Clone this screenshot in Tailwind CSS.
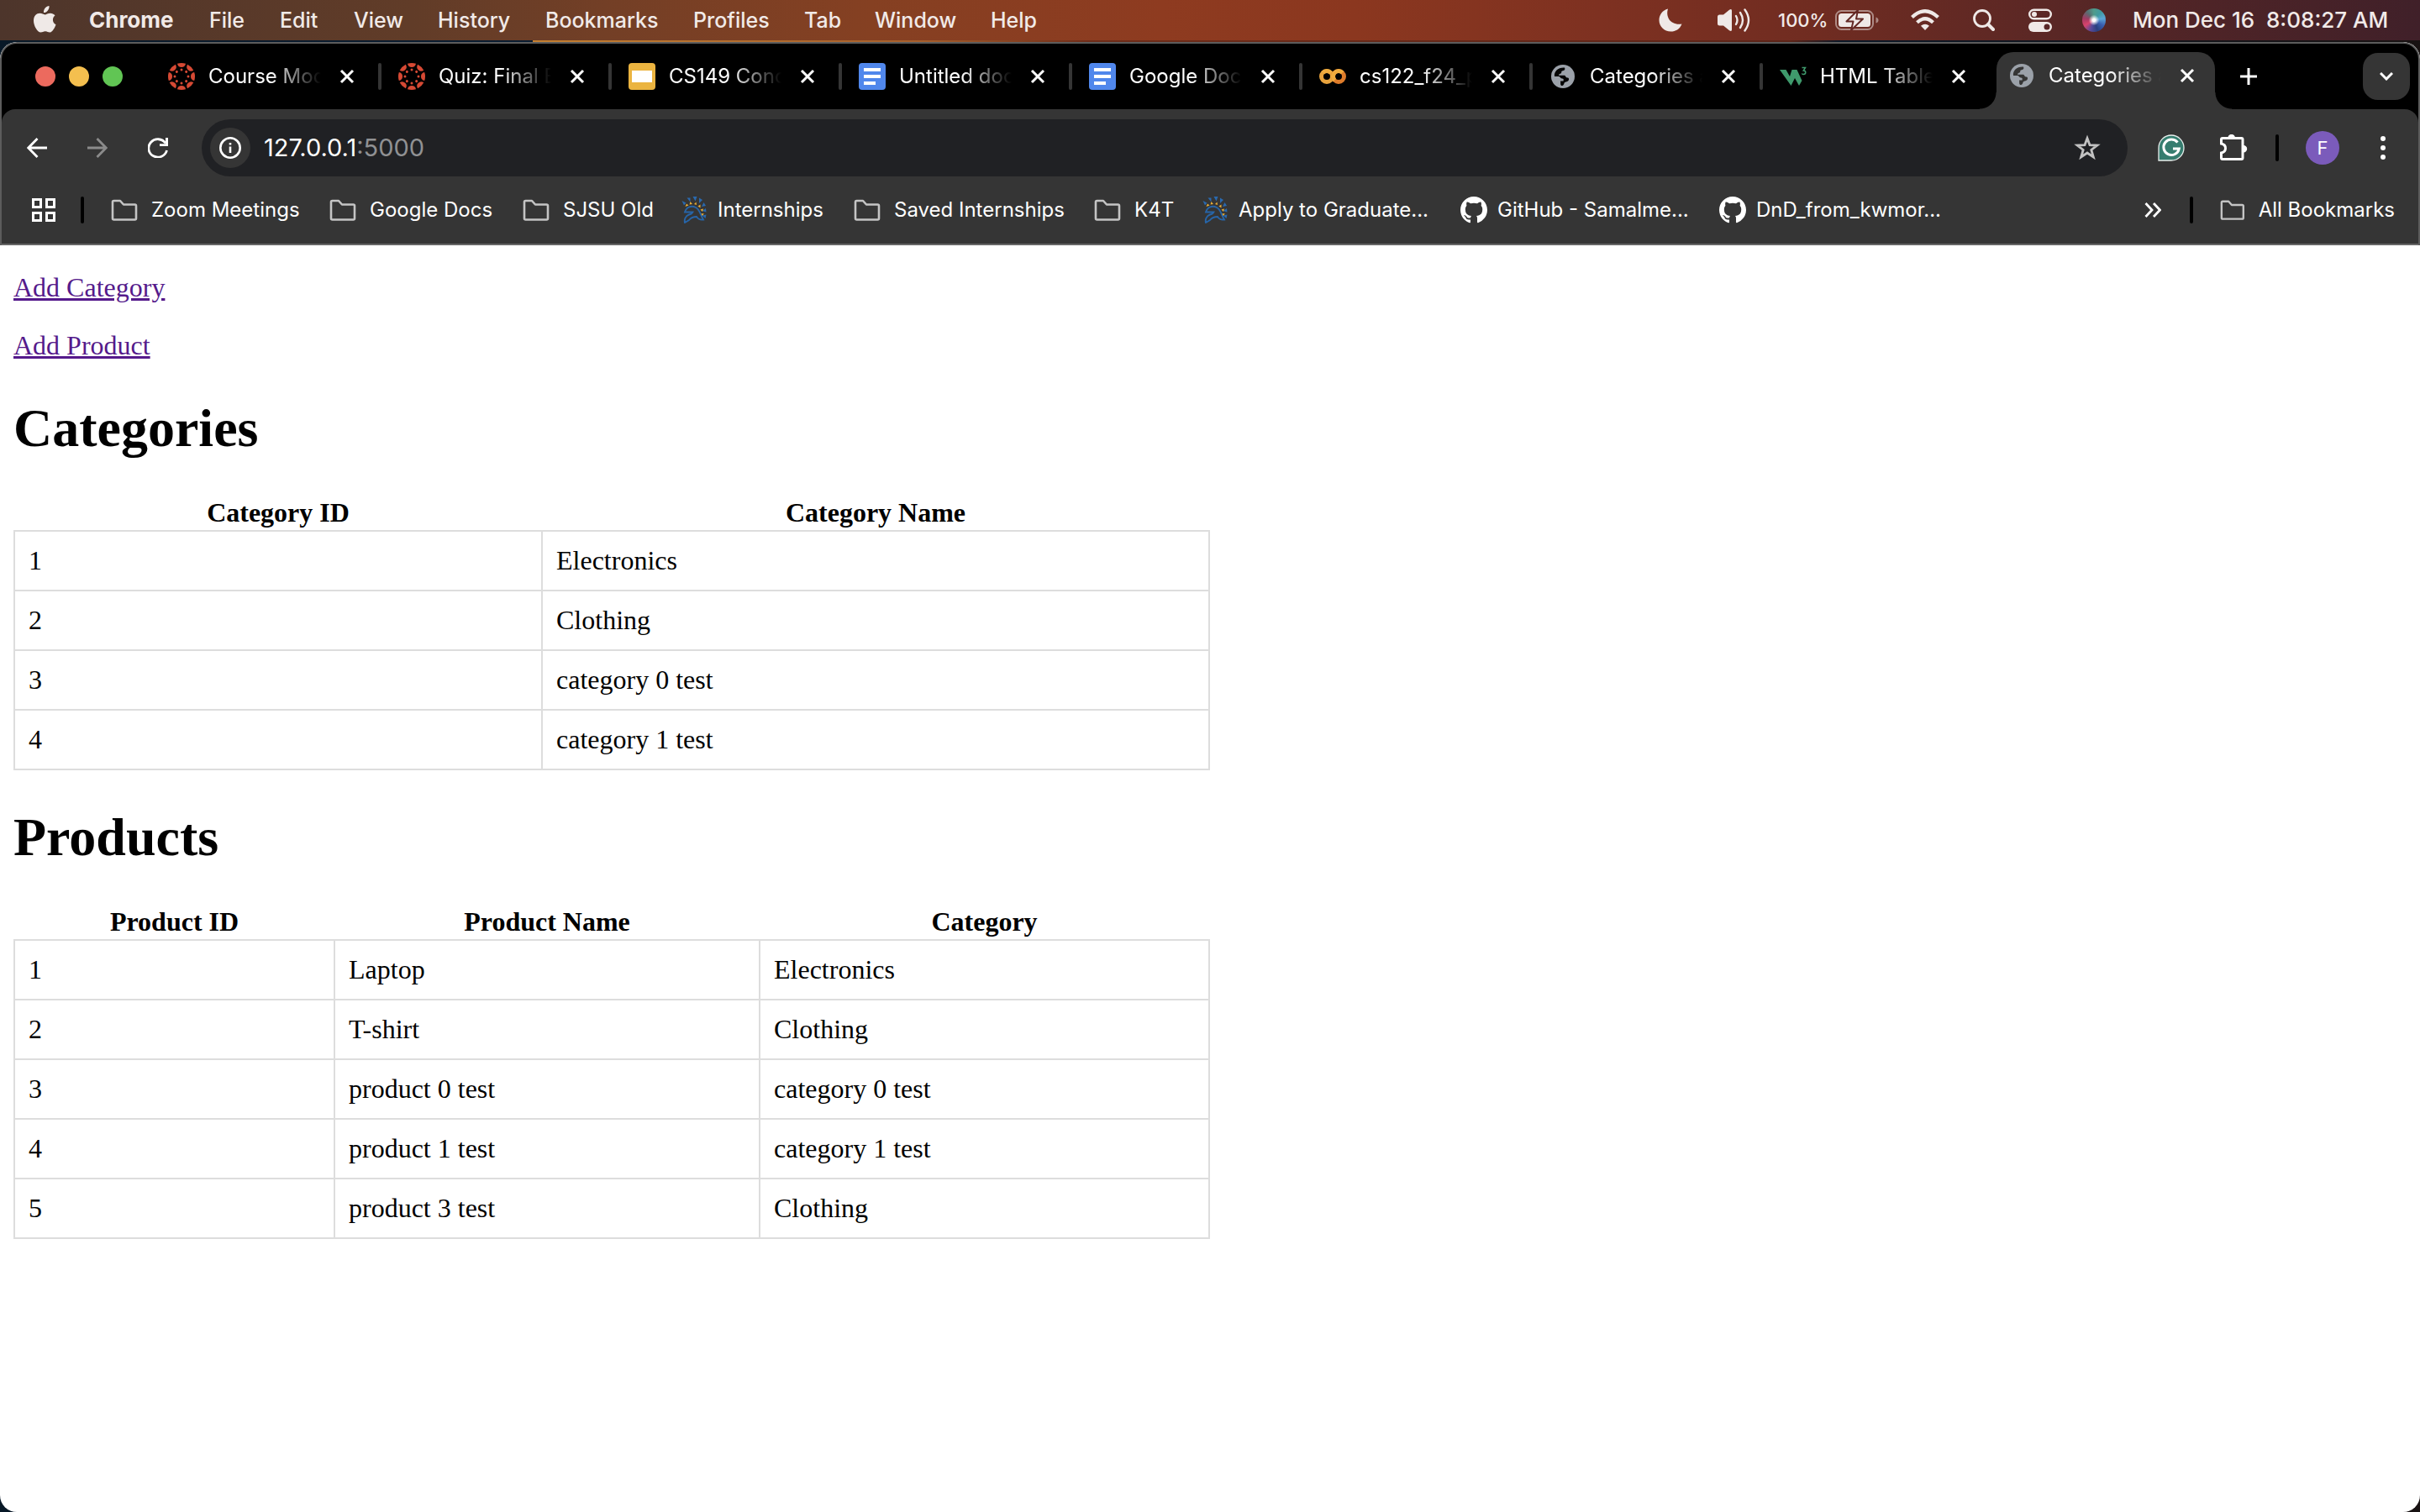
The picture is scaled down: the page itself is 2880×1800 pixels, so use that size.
<!DOCTYPE html>
<html lang="en">
<head>
<meta charset="utf-8">
<title>Categories and Products</title>
<script src="https://cdn.jsdelivr.net/npm/@tailwindcss/browser@4"></script>
</head>
<body class="min-h-screen flex flex-col bg-[linear-gradient(90deg,#081827_0%,#0a1c30_22%,#c47f30_22%,#a8602c_38%,#6e2c19_45%,#5c2418_74%,#0c1726_76%,#181212_100%)] font-['Inter',sans-serif] text-white">

<!-- Shared icons -->
<svg class="hidden" aria-hidden="true">
  <symbol id="close" viewBox="0 0 18 18"><path d="M2 2l14 14M16 2L2 16" stroke="#fff" stroke-width="3" fill="none"/></symbol>
  <symbol id="folder" viewBox="0 0 32 26"><path d="M2 23V3.500Q2 2 3.500 2H11l4 4.500h13.500Q30 6.500 30 8v15q0 1.500-1.500 1.500h-25Q2 24.500 2 23z" stroke="#c4c4c4" stroke-width="2.600" fill="none" stroke-linejoin="round"/></symbol>
  <symbol id="canvas" viewBox="-16 -16 32 32">
    <g fill="#d64934">
      <g id="seg"><path d="M-5 -15.200Q0 -16.800 5 -15.200Q4.200 -11 0 -11Q-4.200 -11 -5 -15.200z"/><circle cy="-8" r="1.500"/></g>
      <use href="#seg" transform="rotate(45)"/><use href="#seg" transform="rotate(90)"/><use href="#seg" transform="rotate(135)"/><use href="#seg" transform="rotate(180)"/><use href="#seg" transform="rotate(225)"/><use href="#seg" transform="rotate(270)"/><use href="#seg" transform="rotate(315)"/>
    </g>
  </symbol>
  <symbol id="slides" viewBox="0 0 32 32"><rect width="32" height="32" rx="4" fill="#ebb440"/><rect x="4" y="9" width="24" height="14" fill="#fff"/></symbol>
  <symbol id="docs" viewBox="0 0 32 32"><rect width="32" height="32" rx="4" fill="#5087ec"/><path d="M6 6h20v4H6zM6 14h20v4H6zM6 22h14v4H6z" fill="#fff"/></symbol>
  <symbol id="colab" viewBox="0 0 32 32"><g fill="none" stroke-width="5"><circle cx="9" cy="16" r="6.500" stroke="#e8a33d"/><circle cx="23" cy="16" r="6.500" stroke="#de7c2b"/><path d="M18.400 11.400a6.500 6.500 0 0 1 9.200 0M13.600 11.400a6.500 6.500 0 0 0-9.200 0" stroke="#f0ac3e"/><path d="M18.400 11.400a6.500 6.500 0 0 0 0 9.200" stroke="#f0ac3e"/></g></symbol>
  <symbol id="globe" viewBox="0 0 28 28"><circle cx="14" cy="14" r="14" fill="#9ba1a9"/><path d="M16 3.500c1 2 0 3.500-2 3.800-1.500.2-2 1.200-1.800 2.200.2 1.500-3.200 1-3.200 3.300h6.500c2 0 1.500 2.700 3.500 2.700 2.500 0 2.500 2 1.500 3.500-1.500 1.800-4.500 1-5 3.200s-1.500 2.800-3.500 2.800c-1.500-1.500-.5-3-1-5.500h3.500c.5-1.800.5-2.700-1.500-3-2.500-.4-2-2.500-4.500-2.500H4C3 8 8.500 3 16 3.500z" fill="#050505"/></symbol>
  <symbol id="globe-tab" viewBox="0 0 28 28"><circle cx="14" cy="14" r="14" fill="#9ba1a9"/><path d="M16 3.500c1 2 0 3.500-2 3.800-1.500.2-2 1.200-1.800 2.200.2 1.500-3.200 1-3.200 3.300h6.500c2 0 1.500 2.700 3.500 2.700 2.500 0 2.500 2 1.500 3.500-1.500 1.800-4.500 1-5 3.200s-1.500 2.800-3.500 2.800c-1.500-1.500-.5-3-1-5.500h3.500c.5-1.800.5-2.700-1.500-3-2.500-.4-2-2.500-4.500-2.500H4C3 8 8.500 3 16 3.500z" fill="#353535"/></symbol>
  <symbol id="w3" viewBox="0 0 32 32"><path d="M0 8h7.500l4.500 8 2.500-8h6l6 13-3.500 6-5-9-4.500 9z" fill="#3f9a6c"/><path d="M26.500 5.500h4l-2.200 3.500q2.500 0 2.500 2.300 0 2.200-2.500 2.200-1.500 0-2-1" stroke="#3f9a6c" stroke-width="1.500" fill="none"/></symbol>
  <symbol id="spartan" viewBox="0 0 32 32">
    <path d="M5 18.500C7 12 13 10.500 18 13c5.500 3 5 8.500 9 14.500-3 .5-6-.5-8-3.500-4 0-7 1.500-9 4l-5 3c-1-4 1-8 5-9.500 2-.5 4-1.500 4.500-3z" fill="none" stroke="#2765a8" stroke-width="1.900"/>
    <path d="M1.500 5l5 2.500-2.500 3zM7.500 1.500h4l0 5zM14.500 0h5l-2 5.500zM22 1.500l4 2.500-4 4zM27.500 7l2.500 4-5 1zM30 14l.5 4.500-5-1.500zM30.500 21.500l-1 4.500-4-3.500z" fill="#2a69ae"/>
    <path d="M5.500 12l1.500-3.500 2.500 2zM10.500 9.500l1-3.500 2.500 3zM16 9l2.500-2.500.5 3.500zM20.500 11.500l3-2 0 4zM23.500 15.500l3.500-1-1 3.500zM24.500 20l3.500.500-2.500 2.500z" fill="#e8ad36"/>
  </symbol>
  <symbol id="github" viewBox="0 0 16 16"><path fill="#fff" d="M8 0C3.580 0 0 3.580 0 8c0 3.540 2.290 6.530 5.470 7.590.4.070.55-.17.55-.38 0-.19-.01-.82-.01-1.490-2.010.37-2.530-.49-2.690-.94-.09-.23-.48-.94-.82-1.130-.28-.15-.68-.52-.01-.53.63-.01 1.080.58 1.230.82.72 1.210 1.870.87 2.330.66.07-.52.28-.87.51-1.070-1.780-.2-3.640-.89-3.640-3.950 0-.87.31-1.590.82-2.150-.08-.2-.36-1.020.08-2.120 0 0 .67-.21 2.200.82.64-.18 1.320-.27 2-.27s1.360.09 2 .27c1.530-1.040 2.200-.82 2.200-.82.44 1.100.16 1.920.08 2.120.51.56.82 1.270.82 2.150 0 3.070-1.870 3.750-3.650 3.950.29.25.54.73.54 1.480 0 1.070-.01 1.930-.01 2.200 0 .21.15.46.55.38A8.010 8.010 0 0 0 16 8c0-4.420-3.580-8-8-8z"/></symbol>
</svg>

<!-- System menu bar -->
<header class="h-12 flex items-center pl-[38px] pr-[37px] text-[25px] leading-8 font-medium text-[#f1eae8] bg-[linear-gradient(90deg,#4d352b_0%,#613c28_17%,#733f26_25%,#854022_36%,#8e3b20_48%,#8b371f_56%,#7e3121_66%,#702c21_75%,#552626_87%,#402029_100%)]">
  <svg class="w-[30px] h-[34px] mr-[38px]" viewBox="0 0 30 34" fill="#efe9e7"><path d="M20.500 0c.3 2.300-.6 4.300-1.800 5.800-1.200 1.400-2.900 2.400-4.700 2.300-.3-2.200.7-4.300 1.800-5.600C17 1.100 18.900.1 20.500 0zM27.500 11.500c-3.500 2.300-3.600 8.500 1 10.700-1 3-3.800 8.800-7 9.300-2.200.2-3-1.300-5.500-1.300s-3.500 1.300-5.500 1.300C6.500 31.500 2 23.500 2 17.700 2 12 5.500 8.800 9.400 8.800c2.500 0 4.500 1.600 6 1.600s3.700-1.700 6.500-1.700c2 0 4.300.9 5.600 2.800z"/></svg>
  <nav class="flex items-center gap-[42px]">
    <b class="w-[101px] text-[26px] font-bold">Chrome</b>
    <button class="w-[42px] text-left whitespace-nowrap">File</button>
    <button class="w-[46px] text-left whitespace-nowrap">Edit</button>
    <button class="w-[58px] text-left whitespace-nowrap">View</button>
    <button class="w-[86px] text-left whitespace-nowrap">History</button>
    <button class="w-[134px] text-left whitespace-nowrap">Bookmarks</button>
    <button class="w-[90px] text-left whitespace-nowrap">Profiles</button>
    <button class="w-[42px] text-left whitespace-nowrap">Tab</button>
    <button class="w-[96px] text-left whitespace-nowrap">Window</button>
    <button class="w-[56px] text-left whitespace-nowrap">Help</button>
  </nav>
  <div class="ml-auto flex items-center">
    <svg class="w-7 h-7 mr-[42px]" viewBox="0 0 28 28"><path d="M11 0.500C8 10 14 20.500 27.500 18.500 25 25 20 27.500 14.500 27.500 6.500 27.500.500 21.500.500 14 .500 8 4.500 2 11 .500z" fill="#efe9e7"/></svg>
    <svg class="w-10 h-7 mr-8" viewBox="0 0 40 28"><path d="M0 10q0-2.500 2.500-2.500H7L14 1.800q3-2 3 1v22.400q0 3-3 1L7 20.500H2.500Q0 20.500 0 18z" fill="#efe9e7"/><path d="M22 9q3 5 0 10M27 5q6 9 0 18M32.500 1.500q9 12.500 0 25" stroke="#efe9e7" stroke-width="2.400" fill="none" stroke-linecap="round"/></svg>
    <span class="w-[60px] text-[22px] mr-2">100%</span>
    <svg class="w-[52px] h-6 mr-[38px]" viewBox="0 0 52 24"><rect x="1" y="1" width="44" height="22" rx="6.500" fill="none" stroke="#efe9e7" stroke-opacity=".5" stroke-width="2"/><rect x="4" y="4" width="38" height="16" rx="3.500" fill="#efe9e7"/><path d="M48.500 8.500v7q3-1 3-3.500t-3-3.500z" fill="#efe9e7" fill-opacity=".5"/><path d="M27 0L13.500 13.500h8L19 24 33 10.500h-8z" fill="#efe9e7" stroke="#632925" stroke-width="2" stroke-linejoin="round"/></svg>
    <svg class="w-[34px] h-[26px] mr-10" viewBox="0 0 34 26" fill="none" stroke="#efe9e7" stroke-width="4.200"><path d="M1.500 9.500q15.500-14.500 31 0M7.500 15.800q9.500-9 19 0"/><path d="M17 25l-5-5.200q5-4 10 0z" fill="#efe9e7" stroke="none"/></svg>
    <svg class="w-[26px] h-[26px] mr-10" viewBox="0 0 26 26" fill="none" stroke="#efe9e7" stroke-linecap="round"><circle cx="11" cy="11" r="9.500" stroke-width="2.800"/><path d="M18 18l6 6" stroke-width="4"/></svg>
    <svg class="w-7 h-7 mr-[36px]" viewBox="0 0 28 28"><rect x="1.200" y="1.700" width="25.600" height="10.600" rx="5.300" fill="none" stroke="#efe9e7" stroke-width="2.400"/><circle cx="7" cy="7" r="3" fill="#efe9e7"/><rect y="16" width="28" height="12" rx="6" fill="#efe9e7"/><circle cx="22" cy="22" r="3.500" fill="#592728"/></svg>
    <span class="size-7 mr-[32px] rounded-full bg-[radial-gradient(circle_at_50%_50%,#ffffff_8%,#ffffff00_32%),conic-gradient(#4f9c8c,#3f9aa0,#5ba6d6,#3a5fb0,#29407e,#5a4a9a,#d8436c,#a33a62,#5a6b70,#4f9c8c)]"></span>
    <time class="w-[305px] text-[26px] whitespace-pre">Mon Dec 16  8:08:27 AM</time>
  </div>
</header>

<!-- Browser window -->
<div class="mt-[2px] grow flex flex-col rounded-[20px] overflow-hidden bg-white">
  <div class="border-2 border-b-0 border-[#5c5c5c] rounded-t-[20px] overflow-hidden bg-black">
    <!-- Tab strip -->
    <div class="h-[78px] flex items-center pl-10 pr-[10px]">
      <div class="flex gap-4 mr-[54px]">
        <button aria-label="Close window" class="size-6 rounded-full bg-[#ec6a5e]"></button>
        <button aria-label="Minimize" class="size-6 rounded-full bg-[#f4bf4f]"></button>
        <button aria-label="Zoom" class="size-6 rounded-full bg-[#61c554]"></button>
      </div>
      <ul class="self-stretch flex items-center text-[24px] leading-8">
        <li class="w-[274px] flex items-center"><svg class="size-8 mr-4"><use href="#canvas"/></svg><span class="w-[134px] overflow-hidden whitespace-nowrap [mask-image:linear-gradient(90deg,#000_55%,transparent)]">Course Modules</span><button aria-label="Close tab" class="ml-[22px]"><svg class="size-[18px]"><use href="#close"/></svg></button><i class="w-1 h-8 ml-7 rounded-full bg-[#353535]"></i></li>
        <li class="w-[274px] flex items-center"><svg class="size-8 mr-4"><use href="#canvas"/></svg><span class="w-[134px] overflow-hidden whitespace-nowrap [mask-image:linear-gradient(90deg,#000_55%,transparent)]">Quiz: Final Exam</span><button aria-label="Close tab" class="ml-[22px]"><svg class="size-[18px]"><use href="#close"/></svg></button><i class="w-1 h-8 ml-7 rounded-full bg-[#353535]"></i></li>
        <li class="w-[274px] flex items-center"><svg class="size-8 mr-4"><use href="#slides"/></svg><span class="w-[134px] overflow-hidden whitespace-nowrap [mask-image:linear-gradient(90deg,#000_55%,transparent)]">CS149 Concurrency</span><button aria-label="Close tab" class="ml-[22px]"><svg class="size-[18px]"><use href="#close"/></svg></button><i class="w-1 h-8 ml-7 rounded-full bg-[#353535]"></i></li>
        <li class="w-[274px] flex items-center"><svg class="size-8 mr-4"><use href="#docs"/></svg><span class="w-[134px] overflow-hidden whitespace-nowrap [mask-image:linear-gradient(90deg,#000_55%,transparent)]">Untitled document</span><button aria-label="Close tab" class="ml-[22px]"><svg class="size-[18px]"><use href="#close"/></svg></button><i class="w-1 h-8 ml-7 rounded-full bg-[#353535]"></i></li>
        <li class="w-[274px] flex items-center"><svg class="size-8 mr-4"><use href="#docs"/></svg><span class="w-[134px] overflow-hidden whitespace-nowrap [mask-image:linear-gradient(90deg,#000_55%,transparent)]">Google Docs</span><button aria-label="Close tab" class="ml-[22px]"><svg class="size-[18px]"><use href="#close"/></svg></button><i class="w-1 h-8 ml-7 rounded-full bg-[#353535]"></i></li>
        <li class="w-[274px] flex items-center"><svg class="size-8 mr-4"><use href="#colab"/></svg><span class="w-[134px] overflow-hidden whitespace-nowrap [mask-image:linear-gradient(90deg,#000_55%,transparent)]">cs122_f24_project</span><button aria-label="Close tab" class="ml-[22px]"><svg class="size-[18px]"><use href="#close"/></svg></button><i class="w-1 h-8 ml-7 rounded-full bg-[#353535]"></i></li>
        <li class="w-[274px] flex items-center"><svg class="size-7 ml-[2px] mr-[18px]"><use href="#globe"/></svg><span class="w-[134px] overflow-hidden whitespace-nowrap [mask-image:linear-gradient(90deg,#000_55%,transparent)]">Categories and</span><button aria-label="Close tab" class="ml-[22px]"><svg class="size-[18px]"><use href="#close"/></svg></button><i class="w-1 h-8 ml-7 rounded-full bg-[#353535]"></i></li>
        <li class="w-[258px] flex items-center"><svg class="size-8 mr-4"><use href="#w3"/></svg><span class="w-[134px] overflow-hidden whitespace-nowrap [mask-image:linear-gradient(90deg,#000_55%,transparent)]">HTML Tables</span><button aria-label="Close tab" class="ml-[22px]"><svg class="size-[18px]"><use href="#close"/></svg></button></li>
        <li class="relative self-end w-[260px] h-[68px] pb-3 pl-[14px] flex items-center rounded-t-[20px] bg-[#353535]">
          <i class="absolute bottom-0 right-full size-5 bg-[radial-gradient(circle_at_0_0,transparent_19px,#353535_20px)]"></i>
          <i class="absolute bottom-0 left-full size-5 bg-[radial-gradient(circle_at_100%_0,transparent_19px,#353535_20px)]"></i>
          <svg class="size-7 ml-[2px] mr-[18px]"><use href="#globe-tab"/></svg><span class="w-[134px] overflow-hidden whitespace-nowrap [mask-image:linear-gradient(90deg,#000_55%,transparent)]">Categories and</span><button aria-label="Close tab" class="ml-[22px]"><svg class="size-[18px]"><use href="#close"/></svg></button>
        </li>
      </ul>
      <button aria-label="New tab" class="ml-[30px]"><svg class="size-5" viewBox="0 0 20 20"><path d="M10 0v20M0 10h20" stroke="#fff" stroke-width="3"/></svg></button>
      <button aria-label="Search tabs" class="ml-auto size-14 rounded-[18px] bg-[#353535] flex items-center justify-center"><svg class="w-4 h-[10px]" viewBox="0 0 16 10"><path d="M1 1l7 7 7-7" fill="none" stroke="#fff" stroke-width="3"/></svg></button>
    </div>

    <div class="bg-[#353535] rounded-t-[16px]">
      <!-- Toolbar -->
      <div class="h-[92px] flex items-center pl-[30px] pr-[39px]">
        <button aria-label="Back"><svg class="size-6" viewBox="0 0 24 24"><path d="M12.500 1L1.800 12l10.700 11M2 12h22" fill="none" stroke="#fff" stroke-width="2.800"/></svg></button>
        <button aria-label="Forward" class="ml-12"><svg class="size-6" viewBox="0 0 24 24"><path d="M11.500 1l10.700 11-10.700 11M22 12H0" fill="none" stroke="#8b8b8b" stroke-width="2.800"/></svg></button>
        <button aria-label="Reload" class="ml-12"><svg class="size-6" viewBox="0 0 24 24"><path d="M22.500 15A11 10.700 0 1 1 21 6.500" fill="none" stroke="#fff" stroke-width="2.800"/><path d="M24 0v10H14V7.300h7V0z" fill="#fff"/></svg></button>
        <div class="grow h-[68px] ml-10 mr-9 pl-[10px] pr-[32px] flex items-center rounded-full bg-[#202124]">
          <button aria-label="Site information" class="size-12 mr-4 rounded-full bg-[#353535] flex items-center justify-center"><svg class="size-[26px]" viewBox="0 0 26 26"><circle cx="13" cy="13" r="11.700" fill="none" stroke="#fff" stroke-width="2.600"/><path d="M13 11.500v7.500M13 7v2.600" stroke="#fff" stroke-width="2.600"/></svg></button>
          <div role="textbox" aria-label="Address" class="grow text-[29px] leading-9 whitespace-nowrap">127.0.0.1<span class="text-[#909193]">:5000</span></div>
          <button aria-label="Bookmark this page"><svg class="size-8" viewBox="0 0 32 32"><path d="M16 4.500l3 8.200 8.800.3-7 5.400 2.500 8.500L16 22l-7.300 4.900 2.500-8.500-7-5.400 8.800-.3z" fill="none" stroke="#c2c2c2" stroke-width="2.800"/></svg></button>
        </div>
        <button aria-label="Grammarly"><svg class="size-8" viewBox="0 0 32 32"><path d="M1 31V16a15 15 0 1 1 15 15z" fill="#367d6f" stroke="#e8efed" stroke-width="1.300"/><path d="M23.500 9.500A9.300 9.300 0 1 0 25.300 17H18" fill="none" stroke="#fff" stroke-width="3"/></svg></button>
        <button aria-label="Extensions" class="ml-[41px]"><svg class="w-[34px] h-8" viewBox="0 0 34 32"><path d="M4 4.500h22.500q1.500 0 1.500 1.500v22q0 1.500-1.500 1.500H4Q2.500 29.500 2.500 28v-6q5-1 5-5.500t-5-5.500V6Q2.500 4.500 4 4.500z" fill="none" stroke="#fff" stroke-width="3"/><path d="M10.500 4a4.200 4.200 0 0 1 8.400 0zM29 13a4.200 4.200 0 0 1 0 8.400z" fill="#fff"/></svg></button>
        <i class="w-1 h-8 ml-[33px] rounded-full bg-black"></i>
        <button aria-label="Profile" class="ml-8 size-10 rounded-full bg-[#7b5bbb] text-[22px] leading-10">F</button>
        <button aria-label="Menu" class="ml-[49px] flex flex-col gap-[5px]"><i class="size-[6px] rounded-full bg-white"></i><i class="size-[6px] rounded-full bg-white"></i><i class="size-[6px] rounded-full bg-white"></i></button>
      </div>

      <!-- Bookmarks bar -->
      <div class="h-[70px] pb-3 flex items-center pl-9 pr-[28px] text-[24px] leading-8 border-b-2 border-[#666]">
        <button aria-label="Apps"><svg class="size-7" viewBox="0 0 28 28" fill="none" stroke="#fff" stroke-width="3"><path d="M1.500 1.500h9v9h-9zM17.500 1.500h9v9h-9zM1.500 17.500h9v9h-9zM17.500 17.500h9v9h-9z"/></svg></button>
        <i class="w-1 h-8 ml-[30px] mr-8 rounded-full bg-black"></i>
        <nav class="flex items-center whitespace-nowrap">
          <button class="w-[260px] flex items-center gap-4"><svg class="w-8 h-[26px]"><use href="#folder"/></svg>Zoom Meetings</button>
          <button class="w-[230px] flex items-center gap-4"><svg class="w-8 h-[26px]"><use href="#folder"/></svg>Google Docs</button>
          <button class="w-[188px] flex items-center gap-4"><svg class="w-8 h-[26px]"><use href="#folder"/></svg>SJSU Old</button>
          <a href="#" class="w-[206px] flex items-center gap-3"><svg class="size-8"><use href="#spartan"/></svg>Internships</a>
          <button class="w-[286px] flex items-center gap-4"><svg class="w-8 h-[26px]"><use href="#folder"/></svg>Saved Internships</button>
          <button class="w-[128px] flex items-center gap-4"><svg class="w-8 h-[26px]"><use href="#folder"/></svg>K4T</button>
          <a href="#" class="w-[308px] flex items-center gap-3"><svg class="size-8"><use href="#spartan"/></svg>Apply to Graduate...</a>
          <a href="#" class="w-[308px] flex items-center gap-3"><svg class="size-8"><use href="#github"/></svg>GitHub - Samalme...</a>
          <a href="#" class="flex items-center gap-3"><svg class="size-8"><use href="#github"/></svg>DnD_from_kwmor...</a>
        </nav>
        <button aria-label="More bookmarks" class="ml-auto"><svg class="w-5 h-[18px]" viewBox="0 0 20 18"><path d="M1.500 1l7.500 8-7.500 8M11 1l7.500 8-7.500 8" fill="none" stroke="#fff" stroke-width="2.800"/></svg></button>
        <i class="w-1 h-8 ml-[34px] mr-8 rounded-full bg-black"></i>
        <button class="w-[208px] flex items-center gap-4 whitespace-nowrap"><svg class="w-8 h-[26px]"><use href="#folder"/></svg>All Bookmarks</button>
      </div>
    </div>
  </div>

  <!-- Page -->
  <main class="px-4 py-8 font-['Liberation_Serif',serif] text-[32px] leading-[37px] text-black">
    <p class="mb-8"><a href="#" class="text-[#551a8b] underline">Add Category</a></p>
    <p><a href="#" class="text-[#551a8b] underline">Add Product</a></p>
    <h1 class="my-[43px] text-[64px] leading-[74px] font-bold">Categories</h1>
    <table class="w-1/2 table-fixed border-collapse">
      <colgroup><col class="w-[628px]"><col></colgroup>
      <thead><tr><th class="px-[2px] py-[2px]">Category ID</th><th class="px-[2px] py-[2px]">Category Name</th></tr></thead>
      <tbody>
        <tr><td class="border-2 border-[#ddd] p-4">1</td><td class="border-2 border-[#ddd] p-4">Electronics</td></tr>
        <tr><td class="border-2 border-[#ddd] p-4">2</td><td class="border-2 border-[#ddd] p-4">Clothing</td></tr>
        <tr><td class="border-2 border-[#ddd] p-4">3</td><td class="border-2 border-[#ddd] p-4">category 0 test</td></tr>
        <tr><td class="border-2 border-[#ddd] p-4">4</td><td class="border-2 border-[#ddd] p-4">category 1 test</td></tr>
      </tbody>
    </table>
    <h1 class="my-[43px] text-[64px] leading-[74px] font-bold">Products</h1>
    <table class="w-1/2 table-fixed border-collapse">
      <colgroup><col class="w-[381px]"><col class="w-[506px]"><col></colgroup>
      <thead><tr><th class="px-[2px] py-[2px]">Product ID</th><th class="px-[2px] py-[2px]">Product Name</th><th class="px-[2px] py-[2px]">Category</th></tr></thead>
      <tbody>
        <tr><td class="border-2 border-[#ddd] p-4">1</td><td class="border-2 border-[#ddd] p-4">Laptop</td><td class="border-2 border-[#ddd] p-4">Electronics</td></tr>
        <tr><td class="border-2 border-[#ddd] p-4">2</td><td class="border-2 border-[#ddd] p-4">T-shirt</td><td class="border-2 border-[#ddd] p-4">Clothing</td></tr>
        <tr><td class="border-2 border-[#ddd] p-4">3</td><td class="border-2 border-[#ddd] p-4">product 0 test</td><td class="border-2 border-[#ddd] p-4">category 0 test</td></tr>
        <tr><td class="border-2 border-[#ddd] p-4">4</td><td class="border-2 border-[#ddd] p-4">product 1 test</td><td class="border-2 border-[#ddd] p-4">category 1 test</td></tr>
        <tr><td class="border-2 border-[#ddd] p-4">5</td><td class="border-2 border-[#ddd] p-4">product 3 test</td><td class="border-2 border-[#ddd] p-4">Clothing</td></tr>
      </tbody>
    </table>
  </main>
</div>
</body>
</html>
